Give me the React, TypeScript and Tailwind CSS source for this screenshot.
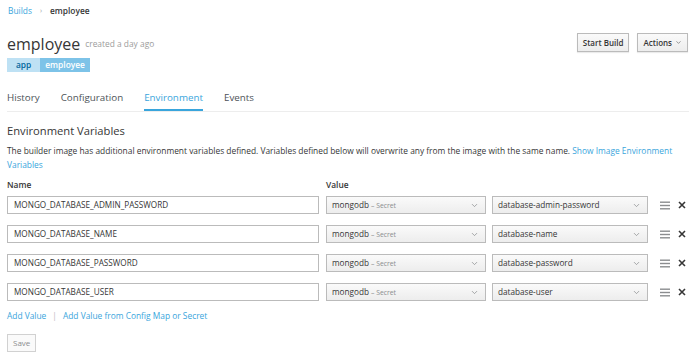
import { ChevronDown } from 'lucide-react'

const rows = [
  { name: 'MONGO_DATABASE_ADMIN_PASSWORD', key: 'database-admin-password' },
  { name: 'MONGO_DATABASE_NAME', key: 'database-name' },
  { name: 'MONGO_DATABASE_PASSWORD', key: 'database-password' },
  { name: 'MONGO_DATABASE_USER', key: 'database-user' },
]

const tabs = ['History', 'Configuration', 'Environment', 'Events']

const Caret = () => (
  <ChevronDown className="h-[9px] w-[9px] text-[#8b8d8f]" strokeWidth={2} />
)

const Hamburger = () => (
  <svg width="10" height="9" viewBox="0 0 10 9" className="text-[#8b8d8f]">
    <rect x="0" y="0.5" width="10" height="1.4" fill="currentColor" />
    <rect x="0" y="3.8" width="10" height="1.4" fill="currentColor" />
    <rect x="0" y="7.1" width="10" height="1.4" fill="currentColor" />
  </svg>
)

const Close = () => (
  <svg width="8" height="8" viewBox="0 0 8 8" className="text-[#363636]">
    <path d="M1 1 L7 7 M7 1 L1 7" stroke="currentColor" strokeWidth="1.6" />
  </svg>
)

const EnvRow = ({ row }: { row: { name: string; key: string } }) => (
  <div className="flex h-[18px] items-center">
    <div className="flex h-full w-[312px] items-center border border-[#bbbbbb] bg-white pl-[6px] text-[8.2px] text-[#363636]">
      {row.name}
    </div>
    <div className="ml-[7px] flex h-full w-[160px] items-center justify-between border border-[#bbbbbb] bg-gradient-to-b from-[#fafafa] to-[#ededed] pl-[5px] pr-[6px]">
      <span className="text-[8.2px] text-[#363636]">
        mongodb <span className="text-[6.8px] text-[#8b8d8f]">– Secret</span>
      </span>
      <Caret />
    </div>
    <div className="ml-[6px] flex h-full w-[156px] items-center justify-between border border-[#bbbbbb] bg-gradient-to-b from-[#fafafa] to-[#ededed] pl-[5px] pr-[6px]">
      <span className="text-[8.2px] text-[#363636]">{row.key}</span>
      <Caret />
    </div>
    <div className="ml-[12px] flex items-center">
      <Hamburger />
    </div>
    <div className="ml-[8px] flex items-center">
      <Close />
    </div>
  </div>
)

export default function App() {
  return (
    <div className="min-h-[358px] bg-white px-[7px] font-['Open_Sans',sans-serif] text-[8.4px] text-[#363636]">
      {/* breadcrumb */}
      <div className="flex h-[22px] items-center">
        <span className="ml-[1px] text-[#39a5dc]">Builds</span>
        <span className="mx-[8px] text-[7px] text-[#9c9c9c]">›</span>
        <span className="font-semibold text-[#363636]">employee</span>
      </div>

      {/* header */}
      <div className="mt-[9px] flex items-start justify-between">
        <div className="flex h-[24px] items-end">
          <span className="text-[16px] leading-[22px] text-[#363636]">employee</span>
          <span className="mb-[4px] ml-[5px] text-[8.4px] text-[#9c9c9c]">created a day ago</span>
        </div>
        <div className="mt-[2px] mr-[1px] flex gap-[8px]">
          <button className="h-[19px] border border-[#bbbbbb] bg-gradient-to-b from-[#fafafa] to-[#ededed] px-[5px] text-[8px] font-semibold text-[#363636] shadow-[0_1px_1px_rgba(0,0,0,0.08)]">
            Start Build
          </button>
          <button className="flex h-[19px] items-center border border-[#bbbbbb] bg-gradient-to-b from-[#fafafa] to-[#ededed] px-[5px] text-[8px] font-semibold text-[#363636] shadow-[0_1px_1px_rgba(0,0,0,0.08)]">
            Actions
            <ChevronDown className="ml-[3px] h-[7px] w-[7px] text-[#555]" strokeWidth={2} />
          </button>
        </div>
      </div>

      {/* labels */}
      <div className="mt-[3px] flex h-[14px] text-[8.4px] font-semibold">
        <span className="flex items-center bg-[#bee1f4] px-[9px] text-[#00659c]">app</span>
        <span className="flex items-center bg-[#7dc3e8] px-[5px] text-white">employee</span>
      </div>

      {/* tabs */}
      <div className="mt-[16px] flex h-[24px] gap-[21px] border-b border-[#ededed] text-[9.8px]">
        {tabs.map((t) => (
          <div
            key={t}
            className={`flex items-center border-b-2 ${
              t === 'Environment' ? 'border-[#39a5dc] text-[#39a5dc]' : 'border-transparent text-[#4d5258]'
            }`}
          >
            {t}
          </div>
        ))}
      </div>

      {/* env vars */}
      <div className="mt-[11px] flex h-[16px] items-center text-[11.2px] text-[#363636]">Environment Variables</div>
      <p className="mt-[5px] leading-[14px] text-[#363636]">
        The builder image has additional environment variables defined. Variables defined below will overwrite any from
        the image with the same name. <span className="text-[#39a5dc]">Show Image Environment Variables</span>
      </p>

      <div className="mt-[6px] flex h-[14px] items-center font-semibold">
        <span className="w-[319px]">Name</span>
        <span>Value</span>
      </div>

      <div className="mt-[4px] flex flex-col gap-[11px]">
        {rows.map((r) => (
          <EnvRow key={r.name} row={r} />
        ))}
      </div>

      <div className="mt-[8px] flex h-[14px] items-center text-[#39a5dc]">
        <span>Add Value</span>
        <span className="mx-[6px] text-[#bbbbbb]">|</span>
        <span>Add Value from Config Map or Secret</span>
      </div>

      <button className="mt-[11px] h-[18px] border border-[#d1d1d1] bg-[#fafafa] px-[5px] text-[8px] text-[#8b8d8f]">
        Save
      </button>
    </div>
  )
}
